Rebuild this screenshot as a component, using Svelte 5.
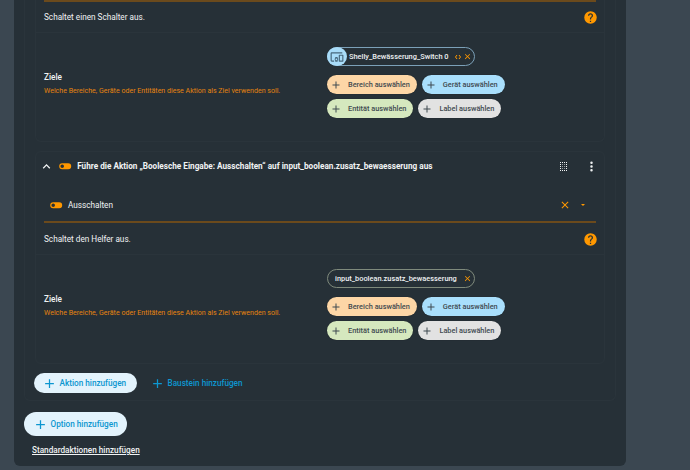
<script>
  const help = "M15.07,11.25L14.17,12.17C13.45,12.89 13,13.5 13,15H11V14.5C11,13.39 11.45,12.39 12.17,11.67L13.41,10.41C13.78,10.05 14,9.55 14,9C14,7.89 13.1,7 12,7A2,2 0 0,0 10,9H8A4,4 0 0,1 12,5A4,4 0 0,1 16,9C16,9.88 15.64,10.67 15.07,11.25M13,19H11V17H13M12,2A10,10 0 0,0 2,12A10,10 0 0,0 12,22A10,10 0 0,0 22,12C22,6.47 17.5,2 12,2Z";
  const toggle = "M17,7H7A5,5 0 0,0 2,12A5,5 0 0,0 7,17H17A5,5 0 0,0 22,12A5,5 0 0,0 17,7M7,15A3,3 0 0,1 4,12A3,3 0 0,1 7,9A3,3 0 0,1 10,12A3,3 0 0,1 7,15Z";
  const plus = "M19,13H13V19H11V13H5V11H11V5H13V11H19V13Z";
  const close = "M19,6.41L17.59,5L12,10.59L6.41,5L5,6.41L10.59,12L5,17.59L6.41,19L12,13.41L17.59,19L19,17.59L13.41,12L19,6.41Z";
  const devices = "M3,6H21V4H3C1.89,4 1,4.89 1,6V18A2,2 0 0,0 3,20H7V18H3V6M13,12H9V13.78C8.39,14.33 8,15.11 8,16C8,16.89 8.39,17.67 9,18.22V20H13V18.22C13.61,17.67 14,16.88 14,16C14,15.12 13.61,14.33 13,13.78V12M11,17.5A1.5,1.5 0 0,1 9.5,16A1.5,1.5 0 0,1 11,14.5A1.5,1.5 0 0,1 12.5,16A1.5,1.5 0 0,1 11,17.5M22,8H16A1,1 0 0,0 15,9V19A1,1 0 0,0 16,20H22A1,1 0 0,0 23,19V9A1,1 0 0,0 22,8M21,18H17V10H21V18Z";

  const pickers = [
    [{ label: "Bereich auswählen", cls: "area" }, { label: "Gerät auswählen", cls: "device" }],
    [{ label: "Entität auswählen", cls: "entity" }, { label: "Label auswählen", cls: "tag" }]
  ];

  // drag handle: 4 x 5 dot grid, outer dots are brighter
  const dragDots = [];
  for (let c = 0; c < 4; c++) {
    for (let r = 0; r < 5; r++) {
      dragDots.push({ x: c * 2, y: r * 2, edge: c === 0 || c === 3 || r === 0 || r === 4 });
    }
  }
</script>

{#snippet icon(d, size, cls)}
  <svg class={cls} width={size} height={size} viewBox="0 0 24 24"><path {d} fill="currentColor" /></svg>
{/snippet}

{#snippet targets(chip)}
  <div class="targets">
    <div class="target-text">
      <div class="ziele">Ziele</div>
      <div class="hint">Welche Bereiche, Geräte oder Entitäten diese Aktion als Ziel verwenden soll.</div>
    </div>
    <div class="target-picks">
      {@render chip()}
      {#each pickers as row}
        <div class="pick-row">
          {#each row as p}
            <div class="pick {p.cls}">
              {@render icon(plus, 12, "pick-plus")}
              <span>{p.label}</span>
            </div>
          {/each}
        </div>
      {/each}
    </div>
  </div>
{/snippet}

{#snippet descRow(text)}
  <div class="desc-row">
    <span>{text}</span>
    {@render icon(help, 15, "help")}
  </div>
{/snippet}

{#snippet deviceChip()}
  <div class="chip device-chip">
    <span class="chip-icon">{@render icon(devices, 14, "chip-device")}</span>
    <span class="chip-label">Shelly_Bewässerung_Switch 0</span>
    <svg class="chip-code" width="6" height="6" viewBox="0 0 6 6" fill="none" stroke="currentColor" stroke-width="1">
      <path d="M2 1L0.5 3L2 5M4 1L5.5 3L4 5" />
    </svg>
    {@render icon(close, 9, "chip-x")}
  </div>
{/snippet}

{#snippet entityChip()}
  <div class="chip entity-chip">
    <span class="chip-label">input_boolean.zusatz_bewaesserung</span>
    {@render icon(close, 9, "chip-x")}
  </div>
{/snippet}

<div class="page">
  <div class="panel">
    <div class="outer">
      <section class="card first">
        <div class="rule"></div>
        {@render descRow("Schaltet einen Schalter aus.")}
        {@render targets(deviceChip)}
      </section>

      <section class="card second">
        <div class="card-head">
          <svg class="chevron" width="15" height="15" viewBox="0 0 24 24"><path d="M7.41,15.41L12,10.83L16.59,15.41L18,14L12,8L6,14L7.41,15.41Z" fill="currentColor" /></svg>
          {@render icon(toggle, 14.4, "toggle")}
          <span class="card-title">Führe die Aktion „Boolesche Eingabe: Ausschalten“ auf input_boolean.zusatz_bewaesserung aus</span>
          <svg class="drag" width="7" height="9" viewBox="0 0 7 9">
            {#each dragDots as dot}
              <rect x={dot.x} y={dot.y} width="1" height="1" fill="currentColor" opacity={dot.edge ? 1 : 0.55} />
            {/each}
          </svg>
          <svg class="dots" width="15" height="15" viewBox="0 0 24 24"><path d="M12,16A2,2 0 0,1 14,18A2,2 0 0,1 12,20A2,2 0 0,1 10,18A2,2 0 0,1 12,16M12,10A2,2 0 0,1 14,12A2,2 0 0,1 12,14A2,2 0 0,1 10,12A2,2 0 0,1 12,10M12,4A2,2 0 0,1 14,6A2,2 0 0,1 12,8A2,2 0 0,1 10,6A2,2 0 0,1 12,4Z" fill="currentColor" /></svg>
        </div>
        <div class="select-row">
          {@render icon(toggle, 14.4, "toggle")}
          <span class="select-value">Ausschalten</span>
          {@render icon(close, 12, "select-x")}
          <span class="caret"></span>
        </div>
        <div class="rule lower"></div>
        {@render descRow("Schaltet den Helfer aus.")}
        {@render targets(entityChip)}
      </section>

      <div class="add-row">
        <div class="btn filled">{@render icon(plus, 15, "")}<span>Aktion hinzufügen</span></div>
        <div class="btn plain">{@render icon(plus, 15, "")}<span>Baustein hinzufügen</span></div>
      </div>
    </div>

    <div class="btn filled option">{@render icon(plus, 15, "")}<span>Option hinzufügen</span></div>
    <div class="defaults">Standardaktionen hinzufügen</div>
  </div>
</div>

<style>
  :global(body) {
    margin: 0;
    background: #3b4751;
  }

  .page {
    width: 690px;
    height: 470px;
    overflow: hidden;
    box-sizing: border-box;
    padding-left: 14px;
    font-family: Roboto, "Liberation Sans", sans-serif;
    font-size: 8.2px;
    color: #f1f3f4;
  }

  .panel {
    width: 612px;
    height: 466px;
    box-sizing: border-box;
    padding: 0 10px;
    background: #263037;
    border-radius: 0 0 6px 6px;
  }

  .outer {
    height: 401px;
    box-sizing: border-box;
    padding: 0 10px;
    border: 1px solid #2a343b;
    border-top: 0;
    border-radius: 0 0 6px 6px;
  }

  .card {
    border: 1px solid #2a343b;
    border-radius: 6px;
    padding: 0 8px;
  }

  .card.first {
    height: 142px;
    box-sizing: border-box;
    border-top: 0;
    border-radius: 0 0 6px 6px;
  }

  .card.second {
    margin-top: 9px;
    height: 213px;
    box-sizing: border-box;
  }

  .rule {
    height: 2px;
    background: #6b4a1c;
  }

  .rule.lower {
    margin-bottom: 1px;
  }

  .desc-row {
    display: flex;
    align-items: center;
    justify-content: space-between;
    height: 30px;
    margin: 0 -8px;
    padding: 0 6px 0 8px;
    border-bottom: 1px solid #2a343b;
  }

  .help {
    color: #ff9800;
  }

  .targets {
    display: flex;
    align-items: center;
    height: 108px;
    box-sizing: border-box;
    padding-bottom: 9px;
  }

  .target-text {
    width: 283px;
    flex: none;
    margin-top: 1px;
  }

  .ziele {
    font-weight: 500;
    margin-bottom: 4px;
  }

  .hint {
    font-size: 7.06px;
    color: #e5840f;
  }

  .target-picks {
    display: flex;
    flex-direction: column;
    align-items: flex-start;
    gap: 5px;
  }

  .chip {
    display: flex;
    align-items: center;
    height: 19px;
    width: 148px;
    box-sizing: border-box;
    border-radius: 10px;
    margin-bottom: 4px;
    font-size: 7.4px;
    font-weight: 500;
  }

  .device-chip {
    border: 1px solid #7ba0b8;
  }

  .entity-chip {
    border: 1px solid #7f8a7c;
    padding-left: 7px;
  }

  .chip-icon {
    width: 20px;
    height: 19px;
    margin-left: -1px;
    border-radius: 50%;
    background: #a8dcf9;
    display: flex;
    align-items: center;
    justify-content: center;
    flex: none;
    color: #47677c;
  }

  .chip-label {
    margin-left: 2px;
    white-space: nowrap;
    color: #eef1f3;
  }

  .entity-chip .chip-label {
    margin-left: 0;
  }

  .chip-code {
    margin-left: 6px;
    color: #ff9800;
    flex: none;
  }

  .chip-x {
    color: #ff9800;
    margin-left: auto;
    margin-right: 2.5px;
    flex: none;
  }

  .pick-row {
    display: flex;
    gap: 5px;
  }

  .pick {
    display: flex;
    align-items: center;
    height: 19px;
    box-sizing: border-box;
    padding: 0 7px 0 3px;
    border-radius: 10px;
    box-shadow: 0 0 1px #141b20;
    color: #3f4a50;
    font-size: 7.35px;
    font-weight: 500;
    white-space: nowrap;
  }

  .pick span {
    margin-left: 6px;
  }

  .area { background: #fdd6a6; }
  .device { background: #a9dffc; }
  .entity { background: #d5e8be; }
  .tag { background: #e2e2e2; }

  .card-head {
    display: flex;
    align-items: center;
    height: 28px;
  }

  .chevron {
    flex: none;
    margin-left: -5px;
    margin-right: 3.8px;
  }

  .toggle {
    color: #ff9800;
    flex: none;
  }

  .card-title {
    margin-left: 5px;
    font-size: 8.2px;
    font-weight: 700;
    white-space: nowrap;
  }

  .drag {
    margin-left: auto;
    flex: none;
  }

  .dots {
    margin-left: 17px;
    margin-right: -2.5px;
    flex: none;
  }

  .select-row {
    display: flex;
    align-items: center;
    height: 32px;
    margin-top: 9px;
    padding-left: 5px;
  }

  .select-value {
    margin-left: 4.5px;
  }

  .select-x {
    color: #ff9800;
    margin-left: auto;
  }

  .caret {
    width: 0;
    height: 0;
    margin: 0 11.5px 0 10px;
    border-left: 2.5px solid transparent;
    border-right: 2.5px solid transparent;
    border-top: 2.5px solid #ff9800;
  }

  .add-row {
    display: flex;
    align-items: center;
    gap: 13px;
    margin: 9px 0 0 -1px;
  }

  .btn {
    display: flex;
    align-items: center;
    gap: 2.5px;
    font-size: 8.2px;
    font-weight: 500;
    color: #0d97d1;
    height: 20px;
  }

  .btn.filled {
    width: 103px;
    box-sizing: border-box;
    padding-left: 8px;
    border-radius: 10px;
    background: #e3f3fc;
    color: #0c96d0;
  }

  .btn.option {
    height: 24px;
    margin-top: 11px;
    padding-left: 9px;
    border-radius: 12px;
  }

  .defaults {
    margin: 9px 0 0 8px;
    font-weight: 500;
    text-decoration: underline;
  }
</style>
